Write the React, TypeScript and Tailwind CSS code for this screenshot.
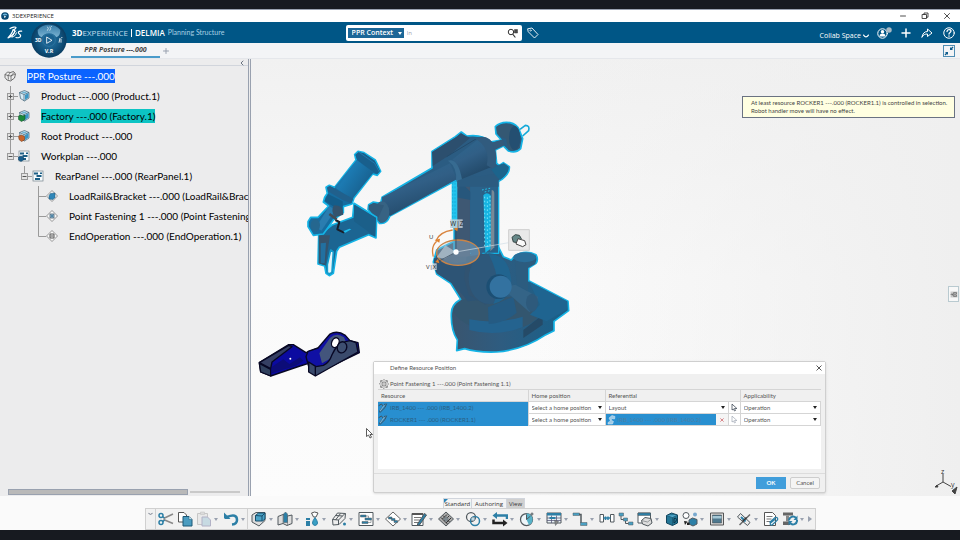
import React from "react";

const line = { fill: "none", stroke: "currentColor", strokeLinecap: "round", strokeLinejoin: "round" } as const;

export default function App() {
  return (
    <div className="min-h-screen flex flex-col bg-[#171a20] pt-[9px] pb-[10px] font-['Open_Sans',sans-serif] text-[#222]">
      <TitleBar />
      <Header />
      <TabBar />
      <div className="flex-1 flex flex-col bg-[#fafafa]">
        <main className="flex-1 flex min-h-0">
          <TreePanel />
          <Viewport />
        </main>
        <ActionBar />
      </div>
    </div>
  );
}

function TitleBar() {
  return (
    <div className="h-[13px] shrink-0 bg-white border-t border-gray-400 flex items-center px-[1px]">
      <svg viewBox="0 0 10 10" className="w-2 h-2">
        <circle cx="5" cy="5" r="4.8" fill="#0a4a73" />
        <path d="M2 4a3 2 0 0 1 6 0z" fill="#6bb2d8" />
        <path d="M4 4.5 6.500 6 4 7.500z" fill="#fff" />
      </svg>
      <span className="ml-[3px] text-[6px] leading-none">3DEXPERIENCE</span>
      <div className="ml-auto flex items-center gap-[12px] pr-[7px]">
        <button aria-label="Minimize" className="w-[10px] h-[10px]">
          <svg viewBox="0 0 10 10"><path d="M2.500 5h5" {...line} strokeWidth="0.8" /></svg>
        </button>
        <button aria-label="Restore" className="w-[10px] h-[10px]">
          <svg viewBox="0 0 10 10"><path d="M2.500 3.500h4v4h-4zM4 3.500V2h4v4.200H6.500" {...line} strokeWidth="0.8" /></svg>
        </button>
        <button aria-label="Close" className="w-[10px] h-[10px]">
          <svg viewBox="0 0 10 10"><path d="m2.500 2.500 5 5m0-5-5 5" {...line} strokeWidth="0.8" /></svg>
        </button>
      </div>
    </div>
  );
}

function Header() {
  return (
    <header className="h-[21px] shrink-0 bg-[#005686] text-white grid grid-cols-[36%_auto_1fr] items-center">
      <div className="flex items-center h-full pl-[7px]">
        <svg viewBox="0 0 48 44" className="w-4 h-[15px]">
          <path d="M9 10c7-4 17-6 18-3 0 3-5 6-10 8 6-1 8 2 5 7-3 6-10 13-19 16 8-9 12-15 14-20" {...line} strokeWidth="3.600" />
          <path d="M26 17c-5 6-8 13-12 19 7-1 13-6 14-13" {...line} strokeWidth="3" />
          <path d="M44 18c-6-1-10 1-10 4 0 4 7 6 7 10 0 5-8 7-14 5" {...line} strokeWidth="3.600" />
        </svg>
        <div className="relative w-9 ml-2 self-stretch">
          <Compass />
        </div>
        <div className="flex items-center ml-[5px] leading-none whitespace-nowrap">
          <span className="text-[8px]"><b>3D</b><span className="text-[#c2dcea]">EXPERIENCE</span></span>
          <span className="mx-[3px] w-px h-2 bg-white" />
          <b className="text-[8px] font-semibold">DELMIA</b>
          <span className="ml-[3px] text-[7px] text-[#a9d0e4] font-['Lato',sans-serif]">Planning Structure</span>
        </div>
      </div>
      <div className="flex items-center">
        <div className="w-[176px] h-4 bg-white rounded-xs flex items-center px-[2px]">
          <label htmlFor="context" className="sr-only">Search context</label>
          <div className="relative">
            <select id="context" className="appearance-none w-[56px] h-[10px] bg-[#1c6798] text-white text-[7px] font-semibold leading-[10px] pl-1 pr-2 block">
              <option>PPR Context</option>
            </select>
            <Caret className="absolute right-[2px] top-[4px] w-1 h-[3px] pointer-events-none" />
          </div>
          <input aria-label="Search" placeholder="In" className="min-w-0 flex-1 h-3 px-[3px] text-[6px] text-gray-700 placeholder:text-gray-400 outline-none" />
          <button aria-label="Run search" className="w-[11px] h-[10px] text-[#333] mr-[2px]">
            <svg viewBox="0 0 22 20">
              <circle cx="8" cy="8" r="5.500" {...line} strokeWidth="2" />
              <path d="m12 13 4 5" {...line} strokeWidth="2.400" />
              <path d="M15 3h6v7h-6zM16 5h4M16 8h4" fill="#555" stroke="#333" />
            </svg>
          </button>
        </div>
        <button aria-label="Tags" className="ml-[5px] w-3 h-3">
          <svg viewBox="0 0 24 24">
            <path d="M2 3.500 10 2l12 13-7 7L3 10z" {...line} strokeWidth="1.800" />
            <circle cx="7" cy="7" r="1.500" {...line} />
          </svg>
        </button>
      </div>
      <div className="flex items-center justify-end gap-2 pr-[5px]">
        <button className="flex items-center gap-[2px] text-[7px] leading-none pt-[6px] whitespace-nowrap">
          Collab Space
          <svg viewBox="0 0 10 6" className="w-[6px] h-1"><path d="M1 1.500q2 3 4 3t4-3" {...line} strokeWidth="2" /></svg>
        </button>
        <button aria-label="Profile" className="w-4 h-3">
          <svg viewBox="0 0 32 24">
            <circle cx="11" cy="13" r="9.500" {...line} strokeWidth="2" />
            <circle cx="11" cy="9.500" r="3.500" fill="#fff" />
            <path d="M5 19q0-6 6-6t6 6z" fill="#fff" />
            <circle cx="24" cy="6" r="5.500" fill="#a7b9c4" />
          </svg>
        </button>
        <button aria-label="Add" className="w-[10px] h-[10px]">
          <svg viewBox="0 0 20 20"><path d="M10 2v16M2 10h16" {...line} strokeWidth="3" /></svg>
        </button>
        <button aria-label="Share" className="w-3 h-3 ml-[2px]">
          <svg viewBox="0 0 24 24"><path d="M2 20c1-7 5-11 11-11V4l9 8-9 7v-5c-5 0-8 1-11 6z" {...line} strokeWidth="2" /></svg>
        </button>
        <button aria-label="Help" className="w-3 h-3 ml-[2px]">
          <svg viewBox="0 0 24 24">
            <circle cx="12" cy="12" r="10.500" {...line} strokeWidth="2" />
            <path d="M8 9c0-5 8-5 8-1 0 3-4 3-4 6M12 18v.3" {...line} strokeWidth="2.600" />
          </svg>
        </button>
      </div>
    </header>
  );
}

function Compass() {
  return (
    <button aria-label="Compass" className="absolute top-0 left-0 w-9 h-9 z-10">
      <svg viewBox="0 0 108 108">
        <defs>
          <radialGradient id="ball">
            <stop offset="0" stopColor="#2b7bab" />
            <stop offset="0.7" stopColor="#10527d" />
            <stop offset="1" stopColor="#0a3d62" />
          </radialGradient>
          <linearGradient id="gloss" x1="0" y1="0" x2="0" y2="1">
            <stop offset="0" stopColor="#3a83b0" />
            <stop offset="1" stopColor="#8dc1de" />
          </linearGradient>
        </defs>
        <circle cx="54" cy="54" r="53" fill="url(#ball)" />
        <path d="M20 24a44 44 0 0 1 68 0q0 18-12 22-8-12-22-12t-22 12Q20 42 20 24z" fill="url(#gloss)" opacity=".85" />
        <circle cx="54" cy="54" r="19" fill="#1a618f" stroke="#4b93bd" />
        <path d="M47 45v19l16-9z" fill="none" stroke="#fff" strokeWidth="2.500" />
        <path d="M49 14q6 5 0 12M56 14q6 5 0 12M60 12l2 3" stroke="#fff" strokeWidth="2" fill="none" />
        <path d="M84 62l3-14M92 45l1 3M90 62V50" stroke="#fff" strokeWidth="2.500" fill="none" />
        <text x="12" y="60" fontSize="15" fontWeight="700" fill="#fff">3D</text>
        <text x="41" y="92" fontSize="16" fontWeight="700" fill="#fff">V.R</text>
      </svg>
    </button>
  );
}

function TabBar() {
  return (
    <nav className="h-4 shrink-0 bg-[#f3f4f6] border-b border-gray-200 flex items-center pl-[71px] pr-[5px]">
      <a href="#" className="w-[89px] h-full pt-[2px] text-center text-[7px] leading-[10px] font-bold italic text-[#444] border-b-2 border-[#4a9bca] whitespace-nowrap">
        PPR Posture ---.000
      </a>
      <button aria-label="New tab" className="ml-[3px] w-[6px] h-[6px] text-gray-400">
        <svg viewBox="0 0 6 6"><path d="M3 .5v5M.5 3h5" {...line} /></svg>
      </button>
      <button aria-label="Collapse" className="ml-auto w-3 h-3 border border-[#4f8db3] text-[#0f5c8c]">
        <svg viewBox="0 0 20 20">
          <path d="M2 12h6v6l-2-2-3 3-2-2 3-3zM12 2v6h6l-2-2 3-3-2-2-3 3z" fill="currentColor" />
        </svg>
      </button>
    </nav>
  );
}

type Guide = "gap" | "plus" | "minus" | "pass" | "last";

const nodes: { label: string; guides: Guide[]; icon: string; mark?: string }[] = [
  { label: "PPR Posture ---.000", guides: [], icon: "root", mark: "bg-[#0a63ff] text-white" },
  { label: "Product ---.000 (Product.1)", guides: ["plus"], icon: "product" },
  { label: "Factory ---.000 (Factory.1)", guides: ["plus"], icon: "factory", mark: "bg-[#0cc4c4]" },
  { label: "Root Product ---.000", guides: ["plus"], icon: "rootProduct" },
  { label: "Workplan ---.000", guides: ["minus"], icon: "workplan" },
  { label: "RearPanel ---.000 (RearPanel.1)", guides: ["gap", "minus"], icon: "panel" },
  { label: "LoadRail&Bracket ---.000 (LoadRail&Bracket.1)", guides: ["gap", "gap", "pass"], icon: "load" },
  { label: "Point Fastening 1 ---.000 (Point Fastening 1.1)", guides: ["gap", "gap", "pass"], icon: "point" },
  { label: "EndOperation ---.000 (EndOperation.1)", guides: ["gap", "gap", "last"], icon: "end" },
];

function TreePanel() {
  return (
    <aside className="w-[251px] shrink-0 flex flex-col bg-[#ececed] border-r border-gray-400">
      <div className="flex-1 flex flex-col border-r border-gray-400 mr-px min-w-0">
        <div className="h-[7px] border-b border-gray-300 flex justify-end pr-1">
          <button aria-label="Hide tree" className="w-1 text-gray-600">
            <svg viewBox="0 0 4 8"><path d="M3 2 1 4l2 2" {...line} strokeWidth="0.8" /></svg>
          </button>
        </div>
        <ul className="flex-1 overflow-hidden text-[10px] font-['Lato',sans-serif] text-black">
          {nodes.map((n) => (
            <li key={n.label} className="flex items-center h-5 pl-1 whitespace-nowrap">
              {n.guides.map((g, i) => <GuideCell key={i} kind={g} />)}
              <TreeIcon name={n.icon} />
              <span className={`ml-[11px] leading-[14px] ${n.mark || ""}`}>{n.label}</span>
            </li>
          ))}
        </ul>
        <div className="flex items-center h-[6px] mb-[1px] pl-2 gap-[2px]">
          <div className="w-[180px] h-[6px] bg-[#b9b9b9] border border-gray-400" />
          <div className="w-[50px] h-[2px] bg-[#c9c9c9]" />
        </div>
      </div>
    </aside>
  );
}

function GuideCell({ kind }: { kind: Guide }) {
  const box = kind === "plus" || kind === "minus";
  return (
    <svg viewBox="0 0 14 20" className="w-[14px] h-5 shrink-0" stroke="#9a9a9a" fill="none">
      {kind !== "gap" && <path d={kind === "plus" || kind === "pass" ? "M6.500 0v20M7 10.500h7" : "M6.500 0v10.500h7.500"} />}
      {box && <rect x="3.500" y="7.500" width="6" height="6" fill="#e4e4e4" />}
      {box && <path d={kind === "plus" ? "M4.500 10.500h4M6.500 8.500v4" : "M4.500 10.500h4"} stroke="#555" />}
    </svg>
  );
}

function TreeIcon({ name }: { name: string }) {
  const cube = (
    <>
      <path d="M3 5 13 1l9 4v11l-9 6-8-5z" fill="#d6ebf5" stroke="#46667a" strokeWidth="1.500" />
      <path d="m3 5 9 4 10-4M12 9v13" fill="none" stroke="#46667a" strokeWidth="1.500" />
      <path d="m14 10 7-4v9l-7 5z" fill="#3b96c4" />
      <path d="m7 5 6-2 5 2-6 2z" fill="#6fb5d6" />
    </>
  );
  const plan = (
    <>
      <rect x="2" y="2" width="20" height="20" fill="#f6fafc" stroke="#7d8b93" strokeWidth="1.500" />
      <path d="M4 5h8v4H4zM9 10h10v4H9zM6 16h10v4H6zM16 5h4v3h-4z" fill="#1d5f86" />
    </>
  );
  const diamond = <path d="M12 1 23 12 12 23 1 12z" fill="#f8f8f8" stroke="#777" strokeWidth="1.500" />;
  return (
    <svg viewBox="0 0 24 24" className="w-3 h-3 shrink-0">
      {name === "root" && (
        <>
          <path d="m2 9 5-5 6 1 6-2 4 5-2 8-8 6-7-2-4-5z" fill="#eee" stroke="#444" strokeWidth="1.500" />
          <path d="m2 9 6 2 5-6M8 11l1 8M8 11l6 1 6-7M14 12v9M14 12l8-4" fill="none" stroke="#444" strokeWidth="1.300" />
        </>
      )}
      {["product", "factory", "rootProduct"].includes(name) && cube}
      {name === "factory" && <path d="M1 12q5-4 9 0l4-2v9l-7 4-6-4z" fill="#1b8a3a" stroke="#0d4a20" />}
      {name === "rootProduct" && <path d="m1 12 6-2 6 3v7l-6 3-5-4z" fill="#c8642b" stroke="#6b3313" />}
      {["workplan", "panel"].includes(name) && plan}
      {name === "workplan" && <path d="m1 14 5-2 5 2v6l-5 3-5-3z" fill="#165c8c" stroke="#0b3c60" />}
      {["load", "point", "end"].includes(name) && diamond}
      {name === "load" && <path d="m6 11 3-4 9-1v9l-4 4-8-1z" fill="#2f86b8" stroke="#1a5579" />}
      {name === "point" && <><rect x="8" y="8" width="8" height="8" fill="#8fc1dc" stroke="#456" strokeWidth="1.500" /><path d="M10.500 10.500h3v3h-3z" fill="#245c80" /></>}
      {name === "end" && <path d="M8 8h8M8 16h8M9 12h6M8 8v8M16 8v8" fill="none" stroke="#555" strokeWidth="2" />}
    </svg>
  );
}

function Viewport() {
  return (
    <section className="relative flex-1 min-w-0 overflow-hidden bg-linear-to-b from-[#f1f1f1] via-[#fafafa] to-[#fcfcfc]">
      <div className="absolute inset-0 bg-linear-to-r from-transparent from-40% to-[#efefef]" />
      <Scene />
      <div className="absolute top-[37px] right-[5px] w-[213px] h-[22px] px-2 py-[2px] bg-[#ffffe1] border border-gray-500 text-[6px] leading-[8px] font-['Lato',sans-serif] text-[#444] whitespace-nowrap">
        <p>At least resource ROCKER1 ---.000 (ROCKER1.1) is controlled in selection.</p>
        <p>Robot handler move will have no effect.</p>
      </div>
      <button aria-label="Show panel" className="absolute top-[227px] right-[1px] w-[11px] h-4 bg-[#f8f8f8] border border-[#b9cad0] flex items-center justify-center">
        <svg viewBox="0 0 16 14" className="w-2 h-[7px]">
          <path d="M1 1h14v12H1z" fill="#ccc" />
          <path d="M2 7h4M4 5l2 2-2 2M8 3h5v3H8zM8 8h5v3H8z" {...line} stroke="#444" />
        </svg>
      </button>
      <Dialog />
    </section>
  );
}

function Scene() {
  return (
    <svg viewBox="251 59 709 437" preserveAspectRatio="xMinYMin meet" className="absolute inset-0 w-full h-full">
      <defs>
        <linearGradient id="tube" x1="0" y1="0" x2="0.5" y2="1">
          <stop offset="0" stopColor="#2b6890" />
          <stop offset="0.5" stopColor="#315f86" />
          <stop offset="1" stopColor="#214766" />
        </linearGradient>
        <linearGradient id="gun" x1="0" y1="0" x2="1" y2="0.7">
          <stop offset="0" stopColor="#1a5c88" />
          <stop offset="0.4" stopColor="#1c7ab2" />
          <stop offset="1" stopColor="#175a86" />
        </linearGradient>
        <linearGradient id="plinth" x1="0" y1="0" x2="1" y2="0">
          <stop offset="0" stopColor="#3e5268" />
          <stop offset="0.5" stopColor="#2e5c80" />
          <stop offset="1" stopColor="#186089" />
        </linearGradient>
      </defs>
      <g transform="translate(290 110) scale(.33333)" strokeLinejoin="round">
        {/* base */}
        <g stroke="#14b4e6" strokeWidth="5">
          <path d="M484 610Q484 584 512 568L482 520 440 492 430 456 440 420 500 390 620 400 640 440 664 450 674 438Q704 418 738 434 746 448 738 460L716 474V512L834 574 836 602 792 634V662L768 674Q700 720 620 726 560 728 524 716L500 722 502 690Q482 660 484 610z" fill="url(#plinth)" />
        </g>
        <path d="M490 606Q500 568 550 562L700 560 752 612Q720 662 620 664 530 662 490 606z" fill="#33566f" />
        <path d="M538 628v32q80 22 160-8v-32q-80 24-160 8z" fill="#24638f" />
        <path d="m700 660 58-46v30l-58 40z" fill="#254a67" />
        <path d="m594 592 76-32 10 48q-40 34-84 34z" fill="#255b83" />
        <path d="m716 514 116 60v24l-62 36-50-20 30-30z" fill="#1f6490" />
        <path d="M652 548q0-22 24-24l68 36q-2 34-26 46z" fill="#346487" />
        <ellipse cx="726" cy="578" rx="18" ry="27" fill="#2e5a7c" />
        <path d="M674 440q36 26 62 4v18l-22 12v70l-34-20z" fill="#2c5c7f" />
        <ellipse cx="704" cy="442" rx="34" ry="15" fill="#2a6d98" />
        {/* rail and lower arm */}
        <path d="M492 180h134v250H492z" fill="#2b6188" stroke="#14b4e6" strokeWidth="4" />
        <path d="m500 200 40-20v260h-40z" fill="#3e5873" />
        <path d="m510 215 42 40-10 15-44-8z" fill="#27577c" />
        <path d="M541 180h36v260h-36z" fill="#2c628a" />
        <path d="M485 214h17v140h-17z" fill="#24c5ee" />
        <path d="M488 218v134M495 218v134" stroke="#0fa2d5" strokeWidth="2" strokeDasharray="6 5" />
        <path d="M605 240q8 0 8 12v160l-12 12z" fill="#788996" />
        <path d="M580 256q10-12 22 0v160l-16 12z" fill="#16b4e2" />
        <path d="M584 260v150M592 262v154M600 258v150" stroke="#78e2f7" strokeWidth="3" strokeDasharray="5 7" />
        <path d="m576 240 28-6M584 246l16-4" stroke="#22c2ea" strokeWidth="3" strokeDasharray="5 5" />
        {/* shoulder */}
        <path d="M432 444 500 460 560 450 570 570 534 574 486 520 440 490Q430 470 432 444z" fill="#2d5475" />
        <path d="m530 440 60-10 30 140-34 14-50-30-14-50z" fill="#315371" />
        <ellipse cx="598" cy="506" rx="62" ry="76" fill="#2d587b" />
        <path d="M596 432q60 0 68 78-2 60-54 72 30-66-14-150z" fill="#21648f" />
        <circle cx="626" cy="530" r="37" fill="#1c4f74" />
        <circle cx="632" cy="530" r="33" fill="#3372a0" />
        {/* upper arm */}
        <path d="M426 124 496 80 514 66 530 78Q580 72 600 96L634 90 618 72 616 50Q632 34 660 38 680 42 688 60L698 86 692 116Q676 132 654 122L640 108 616 120 620 160 628 166 640 158 658 170Q660 190 636 208L622 216 500 210 300 318Q290 344 268 340L256 322 234 298 236 284 250 276 272 280 276 262 426 174z" fill="#2b5c82" stroke="#14b4e6" strokeWidth="5" />
        <path d="m426 126 72-44 14-12 28 14-60 50-52 34z" fill="#2c4f6e" />
        <path d="m470 140 96-58" stroke="#244b6b" strokeWidth="3" />
        <path d="M502 206 540 190 560 200 626 190V230H502z" fill="#2b5b80" />
        <path d="M276 262 480 160 500 208 300 318Q276 304 276 262z" fill="url(#tube)" />
        <path d="M488 148 562 90q50 4 44 80l-92 38z" fill="url(#tube)" />
        <path d="M474 152q30-10 42 56l-18 4q4-40-24-60z" fill="#376b91" />
        <path d="M552 84q48-14 62 26 10 36-2 68l-22-12q12-56-38-82z" fill="#315b7e" />
        <path d="m604 178 24-14 14-4 14 10q2 16-26 40-16-14-26-32z" fill="#1c648c" />
        <path d="m606 98 32-10 6 18-30 14z" fill="#345a7b" />
        <path d="M620 50q30-18 58 2l12 60q-14 14-34 8l-8-34q-32-6-28-36z" fill="#345873" />
        <ellipse cx="674" cy="84" rx="17" ry="36" fill="#244f71" />
        <path d="m690 58 16-12q14 0 10 16l-18 16" fill="none" stroke="#14a9d9" strokeWidth="5" />
        <ellipse cx="276" cy="306" rx="22" ry="32" fill="#376383" />
        <path d="M236 286 250 280 282 286 262 330 236 298z" fill="#315a7a" />
        {/* wrist and gun */}
        <g stroke="#14b4e6" strokeWidth="5">
          <path d="M126 345 188 322 192 280 260 322 258 384 236 374 148 412 140 424 130 490 118 497 108 490 104 468 84 462 86 376z" fill="#1c6592" />
          <path d="M54 335 62 322 84 322 116 288 100 276 104 262 112 250 108 232 118 226 134 232 198 150 194 134 204 124 222 128 256 150 272 184 262 196 248 192 192 264 186 282 160 290 160 308 130 330 116 350 100 372 70 376 54 350z" fill="#176c9f" />
        </g>
        <path d="M200 150 250 188 186 268 134 232z" fill="url(#gun)" />
        <path d="M196 134 206 126 222 130 254 152 270 184 262 192 244 182 202 150z" fill="#195f8c" />
        <path d="m206 126 48 34 14 26" fill="none" stroke="#2278ac" strokeWidth="3" />
        <path d="M112 232 120 228 190 266 184 280 158 270 114 244z" fill="#21608c" />
        <path d="M114 252 158 274 158 304 146 300 104 272z" fill="#145d8a" />
        <path d="m78 352 40-64 18 12-42 62z" fill="#2a7db0" />
        <path d="M132 286q30 0 28 28l-24 8q-16-18-4-36z" fill="#34536d" />
        <path d="m136 330 12 6-6 22 20 10" fill="none" stroke="#1a1e28" strokeWidth="6" />
        <path d="m118 312 22 16" stroke="#444b55" strokeWidth="8" />
        <path d="m160 364 18-8 6 2-18 10z" fill="#1dbced" />
        <ellipse cx="76" cy="346" rx="14" ry="19" fill="#25678f" />
        <path d="m192 284 66 40-2 56-64-46z" fill="#1b5f89" />
        <path d="M86 376h34l-14 90-20-6z" fill="#35536c" />
        <path d="m92 400 16-2-4 62h-12z" fill="#2270a0" />
        <path d="m112 464 10-44 8 6-4 60q-8 8-14 2z" fill="#e8f5fa" stroke="#159ccc" strokeWidth="5" />
        {/* manipulator */}
        <ellipse cx="504" cy="428" rx="64" ry="38" fill="#b2c9da" fillOpacity=".35" stroke="#c98448" strokeWidth="4" />
        <path d="M430 440q-8-30 10-46M438 392q10-26 50-32" fill="none" stroke="#d98540" strokeWidth="4" />
        <path d="m440 442 26-36 32 20-34 20z" fill="#b9c9d4" fillOpacity=".7" />
        <path d="M498 426V350M498 426l-56 30" stroke="#33475a" strokeWidth="2" />
        <path d="m498 426 158-28" stroke="#cfdde6" strokeWidth="2" />
        <path d="m434 390 14 8 2-12zM436 456l12 4-4-14zM490 356l12 8 2-12z" fill="#e0812c" />
        <circle cx="498" cy="426" r="8" fill="#fff" />
        <rect x="480" y="328" width="38" height="26" fill="#ccd3d8" fillOpacity=".8" />
        <rect x="426" y="460" width="14" height="20" fill="#d9dde0" fillOpacity=".8" />
        <text x="481" y="347" fontSize="19" fill="#222">W|Z</text>
        <text x="417" y="388" fontSize="18" fill="#222">U</text>
        <text x="408" y="476" fontSize="18" fill="#222">V|X</text>
        <rect x="656" y="359" width="62" height="62" fill="#e9e9e9" stroke="#cfcfcf" strokeWidth="3" />
        <path d="m666 382 10-8 12 2 6 10-10 12-14-2z" fill="#688" stroke="#344" strokeWidth="3" />
        <path d="m684 386 20 6 4 12-10 6-20-8z" fill="#fafafa" stroke="#444" strokeWidth="3" />
      </g>
      {/* bracket */}
      <g transform="translate(250 320) scale(.33333)" stroke="#080824" strokeWidth="4" strokeLinejoin="round">
        <path d="M28 128 116 74 130 74 168 98 204 84 204 110 176 130 150 138 62 168 32 156z" fill="#0b0aa0" />
        <path d="M28 128 116 76 126 80 66 126 62 146z" fill="#353f63" />
        <path d="M28 130 62 148V168L32 156z" fill="#30415e" />
        <path d="M66 140 100 118 118 132 150 112 160 122 140 136 66 160z" fill="#0c0c78" stroke="none" />
        <path d="M168 110 174 94 204 84 240 42Q262 30 286 46L300 62 324 68 328 98 200 160 176 140z" fill="#1010a4" />
        <path d="M208 100 240 54q20-18 42-2l6 14q-36 16-48 50l-24 14z" fill="#43557c" stroke="none" />
        <path d="M176 126 198 140 220 136Q238 128 246 104 262 66 300 62L318 68 324 96 196 168 176 156z" fill="#3a4a6c" />
        <path d="M196 140v28" fill="none" />
        <ellipse cx="256" cy="68" rx="11" ry="15" fill="#fff" transform="rotate(20 256 68)" />
        <ellipse cx="276" cy="82" rx="14" ry="17" fill="#3e4f71" transform="rotate(20 276 82)" />
        <circle cx="121" cy="116" r="3" fill="#fff" stroke="none" />
      </g>
      {/* pointer */}
      <path d="M366.500 428.500v8l2-1.500 1.500 3 1.500-.8-1.500-2.700h2.500z" fill="#fff" stroke="#333" strokeWidth=".8" />
      {/* axis triad */}
      <g stroke="#444" fill="none">
        <path d="M943 482v-8M943 482l-6 3.500M943 482l8 4.500" />
        <path d="m935 487 2-2 1 2z" fill="#333" />
        <path d="m952 491 5-4-2 7z" fill="#444" />
      </g>
      <text x="941" y="474" fontSize="7" fill="#333">z</text>
      <text x="951" y="487" fontSize="7" fill="#333">y</text>
    </svg>
  );
}

function Dialog() {
  return (
    <div role="dialog" aria-labelledby="dlg-title" className="absolute left-[122px] bottom-[3px] w-[453px] bg-[#f0f0f0] border border-[#cfcfcf] rounded-xs shadow-sm font-['Lato',sans-serif] text-[6px] leading-none text-[#555]">
      <div className="h-[12px] bg-white flex items-center justify-between pl-4 pr-[3px]">
        <h2 id="dlg-title">Define Resource Position</h2>
        <button aria-label="Close dialog" className="w-[6px] h-[6px]">
          <svg viewBox="0 0 6 6"><path d="m.8.8 4.400 4.400m0-4.400L.8 5.200" {...line} /></svg>
        </button>
      </div>
      <div className="px-1 pt-[5px]">
        <div className="h-[10px] flex items-center">
          <svg viewBox="0 0 24 24" className="w-[10px] h-[10px] mr-[1px] ml-[1px]">
            <path d="M12 1 23 12 12 23 1 12z" fill="#fff" stroke="#555" strokeWidth="1.500" />
            <circle cx="12" cy="12" r="5" fill="none" stroke="#555" strokeWidth="2" />
            <path d="M4 4h3M4 4v3M17 4h3v3M4 17v3h3M17 20h3v-3M10 12h4" stroke="#666" strokeWidth="2" fill="none" />
          </svg>
          Point Fastening 1 ---.000 (Point Fastening 1.1)
        </div>
        <div className="h-[80px] bg-white">
          <table className="w-full table-fixed border-collapse">
            <colgroup>
              <col className="w-[150px]" />
              <col className="w-[77px]" />
              <col className="w-[111px]" />
              <col className="w-3" />
              <col className="w-3" />
              <col />
            </colgroup>
            <thead>
              <tr className="h-3 bg-[#f0f0f0] border-y border-[#d5d5d5] text-left">
                <th className="p-0 font-normal pl-[3px]">Resource</th>
                <th className="p-0 font-normal pl-[3px] border-l border-[#d5d5d5]">Home position</th>
                <th className="p-0 font-normal pl-[3px] border-l border-[#d5d5d5]" colSpan={3}>Referential</th>
                <th className="p-0 font-normal pl-[3px] border-l border-[#d5d5d5]">Applicability</th>
              </tr>
            </thead>
            <tbody>
              <tr className="h-3">
                <ResourceCell name="IRB_1400 --- .000 (IRB_1400.2)" />
                <SelectCell label="Home position of IRB_1400" value="Select a home position" />
                <SelectCell label="Referential of IRB_1400" value="Layout" span={2} />
                <PickCell />
                <SelectCell label="Applicability of IRB_1400" value="Operation" />
              </tr>
              <tr className="h-3">
                <ResourceCell name="ROCKER1 --- .000 (ROCKER1.1)" />
                <SelectCell label="Home position of ROCKER1" value="Select a home position" />
                <td className="bg-[#288fd0] p-0 border-b border-[#d5d5d5]">
                  <div className="flex items-center gap-[2px] text-[#4a80a6]">
                    <svg viewBox="0 0 20 20" className="w-[10px] h-[10px]">
                      <path d="M4 18h9l2-5-5-3 2-3 5 1 1-5-6-2-6 5 3 6-5 3z" fill="#9fcae6" stroke="#d8ebf6" />
                    </svg>
                    IRB_1400 --- .000 (IRB_1400.2)
                  </div>
                </td>
                <td className="p-0 border-b border-[#d5d5d5] bg-[#f5f5f5]">
                  <button aria-label="Clear referential" className="block mx-auto w-1 h-1 text-[#d8868a]">
                    <svg viewBox="0 0 6 6"><path d="m1 1 4 4m0-4L1 5" {...line} strokeWidth="1.500" /></svg>
                  </button>
                </td>
                <PickCell dim />
                <SelectCell label="Applicability of ROCKER1" value="Operation" />
              </tr>
            </tbody>
          </table>
        </div>
      </div>
      <div className="mt-1 border-t border-[#dcdcdc] h-[19px] flex items-center justify-end gap-1 pr-[5px]">
        <button className="w-[30px] h-3 bg-[#419edb] text-white font-bold">OK</button>
        <button className="w-[30px] h-3 bg-[#f4f4f4] border border-[#cdcdcd] rounded-xs">Cancel</button>
      </div>
    </div>
  );
}

function ResourceCell({ name }: { name: string }) {
  return (
    <td className="bg-[#288fd0] text-[#2a5f84] p-0">
      <div className="flex items-center gap-[2px]">
        <svg viewBox="0 0 20 20" className="w-[10px] h-[10px]">
          <path d="M3 18c-1-5 7-8 11-16M5 18l9-9 3-7M2 5l5-3 2 3" {...line} stroke="#40535f" strokeWidth="2" />
          <path d="M4 16 13 4" stroke="#a9c9dc" strokeWidth="1.500" />
        </svg>
        {name}
      </div>
    </td>
  );
}

function SelectCell({ label, value, span }: { label: string; value: string; span?: number }) {
  return (
    <td colSpan={span} className="p-0 border border-[#d5d5d5]">
      <div className="relative">
        <select aria-label={label} className="appearance-none block w-full h-[11px] pl-[3px] bg-white">
          <option>{value}</option>
        </select>
        <Caret className="absolute right-[3px] top-1 w-1 h-[3px] pointer-events-none text-[#222]" />
      </div>
    </td>
  );
}

function PickCell({ dim }: { dim?: boolean }) {
  return (
    <td className="p-0 border border-[#d5d5d5]">
      <button aria-label="Pick" className={`block mx-auto w-[6px] h-2 ${dim ? "text-gray-400" : "text-gray-800"}`}>
        <svg viewBox="0 0 12 16"><path d="M2 1v11l3-2 2 4 2-1-2-4h4z" {...line} strokeWidth="1.300" /></svg>
      </button>
    </td>
  );
}

function Caret({ className }: { className?: string }) {
  return <svg viewBox="0 0 8 6" className={className}><path d="M0 0h8L4 6z" fill="currentColor" /></svg>;
}

const B = "#2c7fa6";
const D = "#51595e";

const tools: { name: string; menu?: boolean; end?: boolean; art: React.ReactNode }[] = [
  { name: "Cut", art: <><path d="m11 15 19-9M11 17l19 8" stroke="#888" strokeWidth="3" /><path d="M13 14 9 11M13 18l-4 4" stroke={B} strokeWidth="3" /><circle cx="6" cy="9" r="4" fill="none" stroke={B} strokeWidth="3" /><circle cx="6" cy="23" r="4" fill="none" stroke={B} strokeWidth="3" /></> },
  { name: "Copy", art: <><path d="M3 3h11l5 5v14H3z" fill="#fff" stroke="#555" strokeWidth="2" /><path d="M12 11h12l6 6v13H12z" fill="#4b9cc0" stroke="#1c5877" strokeWidth="2" /><path d="M24 11v6h6" fill="#d4eaf4" stroke="#1c5877" /></> },
  { name: "Paste", menu: true, art: <g opacity=".4"><path d="M3 5h20v22H3z" fill="#ddd" stroke="#888" strokeWidth="2" /><path d="M9 2h8v5H9z" fill="#bbb" stroke="#777" /><path d="M12 12h11l6 6v12H12z" fill="#8bb9ce" stroke="#558" strokeWidth="2" /></g> },
  { name: "Undo", menu: true, end: true, art: <><path d="M8 12q20-8 20 6 0 8-10 9" fill="none" stroke={B} strokeWidth="5" /><path d="M2 14V3l13 13H4z" fill={B} /></> },
  { name: "Insert product", menu: true, art: <><path d="m2 8 8-5h18v16l-12 11-14-8z" fill="#ddd" stroke={D} strokeWidth="2" /><path d="m9 9 6-5h13v12l-5 4H9z" fill="#4ba3c7" stroke="#174f6d" strokeWidth="2" /><path d="m9 9 13 1 6-6M22 10v10" fill="none" stroke="#174f6d" strokeWidth="2" /></> },
  { name: "Insert resource", menu: true, art: <><path d="m2 11 10-4 9 3 9-2v17l-10 4-8-4-10 3z" fill="#ddd" stroke={D} strokeWidth="2" /><path d="M12 7v18M21 10v18" stroke={D} /><path d="m13 6 4-4 4 4v17h-8z" fill={B} stroke={D} /></> },
  { name: "Assign", menu: true, art: <><path d="M15 4q6-4 13 0l-4 8h-5z" fill="#fff" stroke="#555" strokeWidth="2" /><path d="M4 14h8v4H4zM4 20h8v10H4z" fill={B} /><path d="M22 13q-10 14 0 16 10-2 0-16" fill="#3aa0c4" stroke={B} strokeWidth="2" /></> },
  { name: "Manufactured item", menu: true, art: <><path d="m3 17 10-13 16 1-1 10-12 12-12 1z" fill="#eee" stroke={D} strokeWidth="2" /><path d="m3 17 12 1 13-13M15 18v9M10 9l13 1M9 18l10-13" fill="none" stroke={D} strokeWidth="2" /><circle cx="27" cy="26" r="3" fill={B} /></> },
  { name: "Workplan", menu: true, art: <><path d="M2 3h28v26H2z" fill="#fff" stroke={D} strokeWidth="2" /><path d="M5 8h11v4H5zM14 14h13v4H14zM8 21h12v4H8z" fill={B} stroke={D} /><path d="M16 10h5v4M20 23h6v-5" fill="none" stroke={D} /></> },
  { name: "Operation", menu: true, art: <><path d="M16 2 31 16 16 30 1 16z" fill="#fff" stroke="#666" strokeWidth="2" /><path d="M7 12h7v4H7zM13 15h7v4h-7zM18 19h7v4h-7z" fill={B} stroke={D} /></> },
  { name: "Work instruction", menu: true, art: <><path d="M2 5h22v24H2z" fill="#fff" stroke={D} strokeWidth="2" /><path d="M2 4h22v4H2z" fill="#555" /><path d="M6 13h14M6 18h13M6 23h8" stroke="#777" strokeWidth="2" /><path d="m13 26 14-21 4 3-14 20-4 1z" fill={B} stroke={D} strokeWidth="2" /></> },
  { name: "Capable resource", menu: true, art: <><path d="M16 2 31 16 16 30 1 16z" fill="#aaa" stroke={D} strokeWidth="2" /><path d="m9 16 9-9M12 20 22 10M16 24l10-10M10 9l13 13M6 13l13 13" stroke="#333" strokeWidth="2" /><path d="m16 10 6 6-6 6-6-6z" fill="#7c868c" /></> },
  { name: "Compare", menu: true, art: <><circle cx="12" cy="12" r="9" fill="none" stroke={D} strokeWidth="2.500" /><circle cx="20" cy="20" r="9" fill="none" stroke={B} strokeWidth="3" /><circle cx="16" cy="16" r="4" fill="#bcdbe9" stroke={D} /></> },
  { name: "Flow", menu: true, art: <><path d="M7 9h23v7" fill="none" stroke={B} strokeWidth="5" /><path d="M1 9 10 2v14z" fill={B} /><path d="M25 24H3v-7" fill="none" stroke="#222" strokeWidth="5" /><path d="m31 24-9-7v14z" fill="#222" /></> },
  { name: "Time analysis", menu: true, art: <><circle cx="15" cy="17" r="12" fill="#eef6fa" stroke={D} strokeWidth="2.500" /><path d="M15 17V5a12 12 0 0 1 5 23z" fill="#57b2c8" /><path d="M15 17V7M15 17l8-7M26 3v6M23 6h6" stroke={D} strokeWidth="2" /></> },
  { name: "Gantt", menu: true, art: <><path d="M2 4h28v20H2z" fill="#eaf2f6" stroke={D} strokeWidth="2" /><path d="M2 4h28v5H2z" fill={B} /><path d="M2 14h28M2 19h28M11 9v15M21 9v15" stroke="#557" strokeWidth="1.500" /><path d="M7 12h12v4H7z" fill={B} /><path d="m17 18 8 3-6 8z" fill="#888" stroke={D} /></> },
  { name: "Precedence", menu: true, art: <><path d="M2 4h13v5H2z" fill="#4aa0c3" stroke={D} /><path d="M14 7h4v17" stroke={D} strokeWidth="3" fill="none" /><path d="M17 23h13v6H17z" fill="#4aa0c3" stroke={D} /></> },
  { name: "Link", art: <><path d="M2 7h7v15H2zM23 7h7v15h-7z" fill="#fff" stroke={D} strokeWidth="2" /><path d="M9 14h14M13 11v7M18 11v7" stroke={B} strokeWidth="3" /></> },
  { name: "Tree view", art: <><path d="M2 4h9v6H2zM11 14h8v6h-8zM21 22h9v6h-9z" fill="#4aa0c3" stroke={D} /><path d="M6 10v7h5M15 20v5h6" stroke={D} strokeWidth="2" fill="none" /></> },
  { name: "Properties", menu: true, art: <><path d="M2 4h25v20H2z" fill="#fff" stroke={D} strokeWidth="2" /><path d="M2 4h25v5H2z" fill={B} stroke={D} /><path d="m9 19 7-6 12 2 2 9-8 6-11-4z" fill="#ddd" stroke={D} strokeWidth="2" /><path d="m9 19 12 3 8-6" stroke={D} fill="none" /></> },
  { name: "Isometric", art: <><path d="m5 9 10-5 12 4v16l-10 5-12-5z" fill="#237696" stroke="#12445c" strokeWidth="2" /><path d="m5 9 12 4 10-5" fill="#55acd0" stroke="#12445c" /><path d="M17 13v16" stroke="#12445c" /><path d="M20 15v9q5-2 5-7 0-4-5-2" fill="none" stroke="#0c3346" strokeWidth="2" /></> },
  { name: "Shading", menu: true, art: <><circle cx="8" cy="9" r="6" fill="#fff" stroke={D} strokeWidth="2" /><circle cx="26" cy="7" r="4" fill="#78a9cf" /><path d="m14 18 7-4 9 3v9l-8 4-8-4z" fill={B} stroke={D} strokeWidth="2" /><path d="m4 20 7 1-5 7zM10 23h5v5h-5z" fill="#222" /></> },
  { name: "Window", menu: true, art: <><path d="M3 4h26v24H3z" fill="#ddd" stroke="#555" strokeWidth="2" /><path d="M7 8h18v16H7z" fill="#4e788e" stroke="#444" /><path d="M7 10h18v5H7z" fill="#a6c8d6" /></> },
  { name: "Hide", menu: true, art: <><path d="m3 12 6-7 19 18-5 6z" fill="#eee" stroke={D} strokeWidth="2" /><path d="m7 28 21-21" stroke="#666" strokeWidth="3" /><path d="m10 12 9 9" stroke={B} strokeWidth="4" /><path d="m13 21 8-8" stroke="#333" strokeWidth="3" /></> },
  { name: "Report", art: <><path d="M3 3h16l6 6v20H3z" fill="#fff" stroke="#555" strokeWidth="2" /><path d="M7 11h12M7 16h10M7 21h8" stroke="#777" strokeWidth="2" /><path d="m13 23 11-10q7-1 5 5L18 28q-5 0-3-4l10-8" fill="none" stroke={B} strokeWidth="2.500" /></> },
  { name: "Update", menu: true, art: <><path d="M2 3h20v6H2zM2 21h14v7H2z" fill="#666" /><path d="M8 9h6v12H8z" fill="#888" /><path d="M14 19a8 8 0 0 1 14-5M30 18a8 8 0 0 1-14 6" fill="none" stroke={B} strokeWidth="4" /><path d="M31 9v9h-8zM13 29v-9h8z" fill={B} /></> },
];

function ActionBar() {
  return (
    <footer className="flex flex-col items-center shrink-0">
      <div className="flex h-3 pt-[2px] ml-2 text-[6px] leading-none text-[#333]">
        <button className="relative w-[29px] h-[10px] bg-[#f4f4f4] border border-b-0 border-gray-300">
          <svg viewBox="0 0 4 4" className="absolute top-0 left-0 w-1 h-1"><path d="M0 0h4L0 4z" fill="#2c86b8" /></svg>
          Standard
        </button>
        <button className="w-[34px] h-[10px] bg-[#f4f4f4] border-t border-gray-300">Authoring</button>
        <button className="w-[19px] h-[10px] bg-[#d0d0d0] border border-b-0 border-gray-300">View</button>
      </div>
      <div className="flex items-center justify-between w-[671px] h-[22px] bg-[#f1f1f1] border border-[#d0d0d0] pr-[2px]">
        <button aria-label="Collapse toolbar" className="w-[10px] h-full border-r border-[#d0d0d0] text-gray-500 pb-[10px]">
          <svg viewBox="0 0 10 10" className="w-full"><path d="M3 4q2 2 4 0" {...line} /></svg>
        </button>
        {tools.map((t) => (
          <div key={t.name} className={t.end ? "flex items-center h-full border-r border-[#d0d0d0]" : "flex items-center"}>
            <button aria-label={t.name} className="w-4 h-4">
              <svg viewBox="0 0 32 32" className="w-4 h-4">{t.art}</svg>
            </button>
            {t.menu && (
              <button aria-label={`${t.name} options`} className="w-2 h-4 text-gray-400">
                <Caret className="mx-auto w-1 h-[3px]" />
              </button>
            )}
          </div>
        ))}
        <button aria-label="More" className="w-1 h-2 text-gray-400">
          <svg viewBox="0 0 4 8"><path d="M0 1v6l4-3z" fill="currentColor" /></svg>
        </button>
      </div>
    </footer>
  );
}
